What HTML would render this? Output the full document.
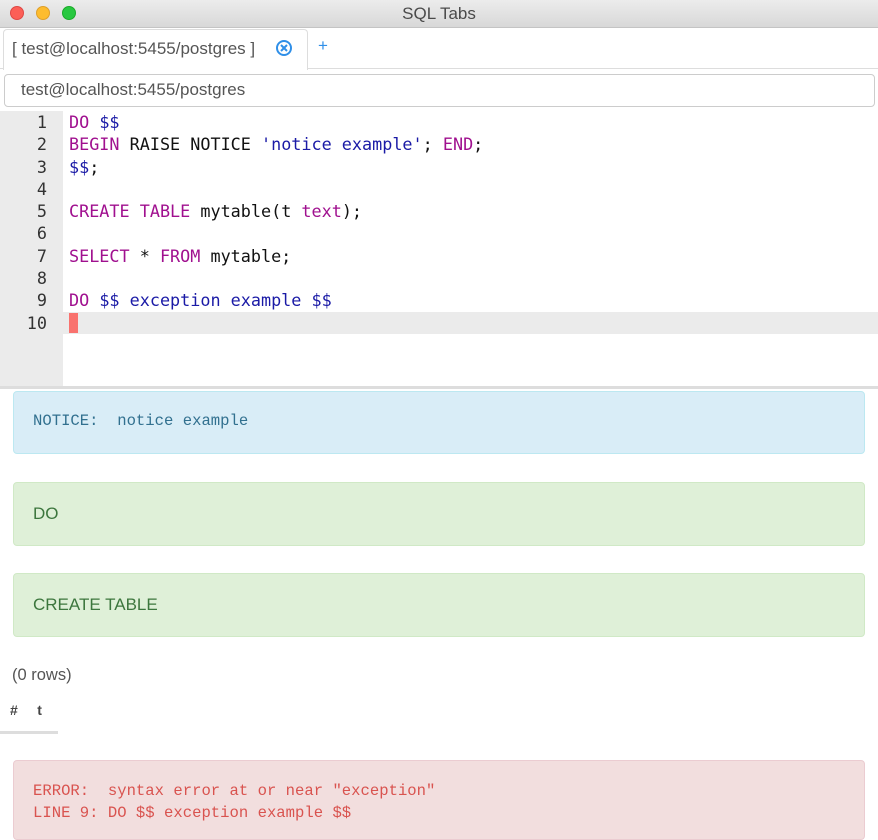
<!DOCTYPE html>
<html><head><style>
*{margin:0;padding:0;box-sizing:border-box}
body{width:878px;height:820px;overflow:hidden;background:#fff;font-family:"Liberation Sans",sans-serif;position:relative}
.a{position:absolute}
.title{left:0;top:0;width:878px;height:28px;background:linear-gradient(#ececec,#d8d8d8);border-bottom:1px solid #c4c4c4;text-align:center;font-size:17px;line-height:28px;color:#4a4a4a}
.dot{top:6px;width:14px;height:14px;border-radius:50%}
.code{font-family:"DejaVu Sans Mono",monospace;font-size:16.8px;line-height:22.3px}
.k{color:#a0108f}.s{color:#1a1aa6}
.box{left:13px;width:852px;border-radius:4px;border:1px solid}
</style></head><body>
<div class="a title">SQL Tabs</div>
<div class="a dot" style="left:10px;background:#fc5f57;border:1px solid #df4744"></div>
<div class="a dot" style="left:36px;background:#fdbc2e;border:1px solid #de9f2a"></div>
<div class="a dot" style="left:62px;background:#28c840;border:1px solid #1aab29"></div>
<div class="a" style="left:0;top:29px;width:878px;height:40px;background:#fff;border-bottom:1px solid #ddd"></div>
<div class="a" style="left:3px;top:29px;width:305px;height:41px;background:#fff;border:1px solid #ddd;border-bottom:none;border-radius:4px 4px 0 0;font-size:17px;color:#555;padding:9px 0 0 8px">[ test@localhost:5455/postgres ]</div>
<svg class="a" style="left:275px;top:39px" width="18" height="18"><circle cx="9" cy="9" r="7" fill="none" stroke="#2f8fe8" stroke-width="2"/><path d="M6 6L12 12M12 6L6 12" stroke="#2f8fe8" stroke-width="2"/></svg>
<div class="a" style="left:318px;top:36px;color:#2f8fe8;font-size:17px">+</div>
<div class="a" style="left:4px;top:74px;width:871px;height:33px;border:1px solid #ccc;border-radius:4px;font-size:17px;color:#555;padding:5px 0 0 16px">test@localhost:5455/postgres</div>
<div class="a" style="left:0;top:111px;width:63px;height:276px;background:#ebebeb"></div>
<div class="a" style="left:0;top:312px;width:878px;height:22px;background:#ebebeb"></div>
<div class="a" style="left:69px;top:313px;width:9px;height:20px;background:#f9726e"></div>
<div class="a" style="left:0;top:386px;width:878px;height:3px;background:#ddd"></div>
<div class="a code" style="left:0;top:111px;width:47px;text-align:right;color:#333">1<br>2<br>3<br>4<br>5<br>6<br>7<br>8<br>9<br>10</div>
<div class="a code" style="left:69px;top:111px;white-space:pre;color:#111"><span class="k">DO</span> <span class="s">$$</span>
<span class="k">BEGIN</span> RAISE NOTICE <span class="s">'notice example'</span>; <span class="k">END</span>;
<span class="s">$$</span>;

<span class="k">CREATE</span> <span class="k">TABLE</span> mytable(t <span class="k">text</span>);

<span class="k">SELECT</span> * <span class="k">FROM</span> mytable;

<span class="k">DO</span> <span class="s">$$ exception example $$</span>
</div>
<div class="a box" style="top:391px;height:63px;background:#d9edf7;border-color:#bce8f1;color:#31708f;font-family:'Liberation Mono',monospace;font-size:15.6px;padding:20px 0 0 19px;white-space:pre">NOTICE:  notice example</div>
<div class="a box" style="top:482px;height:64px;background:#dff0d8;border-color:#d0e9c6;color:#3c763d;font-size:17px;padding:21px 0 0 19px">DO</div>
<div class="a box" style="top:573px;height:64px;background:#dff0d8;border-color:#d0e9c6;color:#3c763d;font-size:17px;padding:21px 0 0 19px">CREATE TABLE</div>
<div class="a" style="left:12px;top:666px;font-size:16.5px;color:#555">(0 rows)</div>
<div class="a" style="left:10px;top:702px;font-size:14px;font-weight:bold;color:#444;white-space:pre">#     t</div>
<div class="a" style="left:0;top:731px;width:58px;height:3px;background:#ddd"></div>
<div class="a box" style="top:760px;height:80px;background:#f2dede;border-color:#ebccd1;color:#d9534f;font-family:'Liberation Mono',monospace;font-size:15.6px;line-height:22px;padding:19px 0 0 19px;white-space:pre">ERROR:  syntax error at or near "exception"
LINE 9: DO $$ exception example $$</div>
</body></html>
